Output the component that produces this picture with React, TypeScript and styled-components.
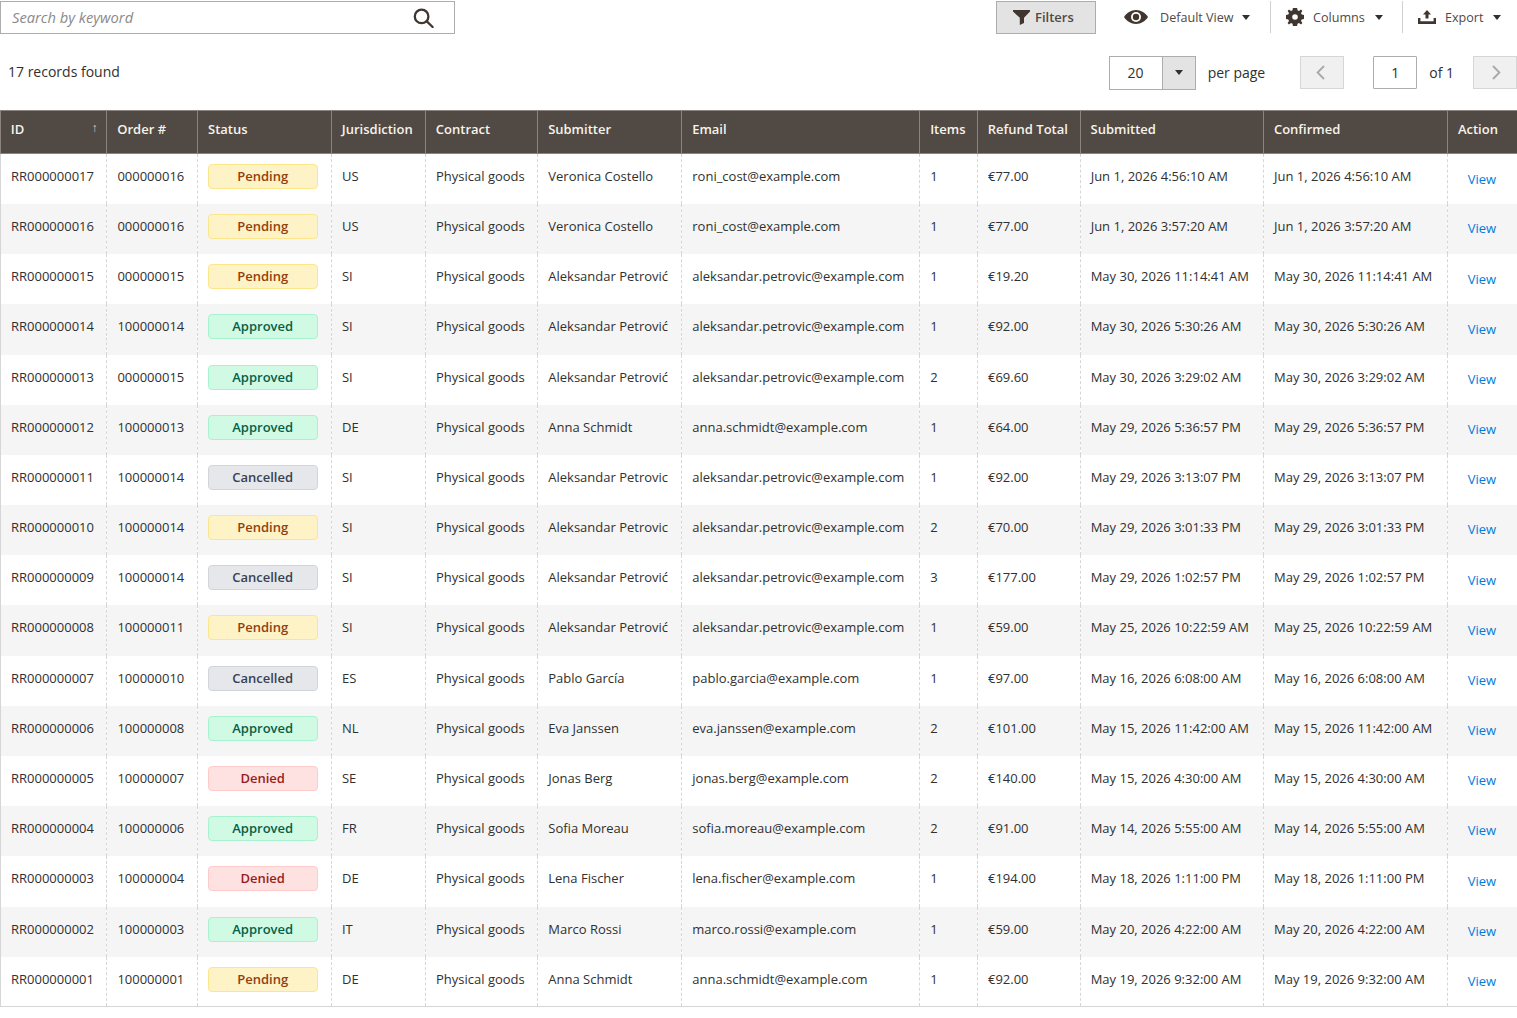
import React from "react";
import styled, { createGlobalStyle } from "styled-components";

type Status = "Pending" | "Approved" | "Cancelled" | "Denied";

interface RefundRow {
  id: string;
  order: string;
  status: Status;
  region: string;
  submitter: string;
  email: string;
  items: number;
  total: string;
  submitted: string;
  confirmed: string;
}

const rows: RefundRow[] = [
  { id: "RR000000017", order: "000000016", status: "Pending", region: "US", submitter: "Veronica Costello", email: "roni_cost@example.com", items: 1, total: "€77.00", submitted: "Jun 1, 2026 4:56:10 AM", confirmed: "Jun 1, 2026 4:56:10 AM" },
  { id: "RR000000016", order: "000000016", status: "Pending", region: "US", submitter: "Veronica Costello", email: "roni_cost@example.com", items: 1, total: "€77.00", submitted: "Jun 1, 2026 3:57:20 AM", confirmed: "Jun 1, 2026 3:57:20 AM" },
  { id: "RR000000015", order: "000000015", status: "Pending", region: "SI", submitter: "Aleksandar Petrović", email: "aleksandar.petrovic@example.com", items: 1, total: "€19.20", submitted: "May 30, 2026 11:14:41 AM", confirmed: "May 30, 2026 11:14:41 AM" },
  { id: "RR000000014", order: "100000014", status: "Approved", region: "SI", submitter: "Aleksandar Petrović", email: "aleksandar.petrovic@example.com", items: 1, total: "€92.00", submitted: "May 30, 2026 5:30:26 AM", confirmed: "May 30, 2026 5:30:26 AM" },
  { id: "RR000000013", order: "000000015", status: "Approved", region: "SI", submitter: "Aleksandar Petrović", email: "aleksandar.petrovic@example.com", items: 2, total: "€69.60", submitted: "May 30, 2026 3:29:02 AM", confirmed: "May 30, 2026 3:29:02 AM" },
  { id: "RR000000012", order: "100000013", status: "Approved", region: "DE", submitter: "Anna Schmidt", email: "anna.schmidt@example.com", items: 1, total: "€64.00", submitted: "May 29, 2026 5:36:57 PM", confirmed: "May 29, 2026 5:36:57 PM" },
  { id: "RR000000011", order: "100000014", status: "Cancelled", region: "SI", submitter: "Aleksandar Petrovic", email: "aleksandar.petrovic@example.com", items: 1, total: "€92.00", submitted: "May 29, 2026 3:13:07 PM", confirmed: "May 29, 2026 3:13:07 PM" },
  { id: "RR000000010", order: "100000014", status: "Pending", region: "SI", submitter: "Aleksandar Petrovic", email: "aleksandar.petrovic@example.com", items: 2, total: "€70.00", submitted: "May 29, 2026 3:01:33 PM", confirmed: "May 29, 2026 3:01:33 PM" },
  { id: "RR000000009", order: "100000014", status: "Cancelled", region: "SI", submitter: "Aleksandar Petrović", email: "aleksandar.petrovic@example.com", items: 3, total: "€177.00", submitted: "May 29, 2026 1:02:57 PM", confirmed: "May 29, 2026 1:02:57 PM" },
  { id: "RR000000008", order: "100000011", status: "Pending", region: "SI", submitter: "Aleksandar Petrović", email: "aleksandar.petrovic@example.com", items: 1, total: "€59.00", submitted: "May 25, 2026 10:22:59 AM", confirmed: "May 25, 2026 10:22:59 AM" },
  { id: "RR000000007", order: "100000010", status: "Cancelled", region: "ES", submitter: "Pablo García", email: "pablo.garcia@example.com", items: 1, total: "€97.00", submitted: "May 16, 2026 6:08:00 AM", confirmed: "May 16, 2026 6:08:00 AM" },
  { id: "RR000000006", order: "100000008", status: "Approved", region: "NL", submitter: "Eva Janssen", email: "eva.janssen@example.com", items: 2, total: "€101.00", submitted: "May 15, 2026 11:42:00 AM", confirmed: "May 15, 2026 11:42:00 AM" },
  { id: "RR000000005", order: "100000007", status: "Denied", region: "SE", submitter: "Jonas Berg", email: "jonas.berg@example.com", items: 2, total: "€140.00", submitted: "May 15, 2026 4:30:00 AM", confirmed: "May 15, 2026 4:30:00 AM" },
  { id: "RR000000004", order: "100000006", status: "Approved", region: "FR", submitter: "Sofia Moreau", email: "sofia.moreau@example.com", items: 2, total: "€91.00", submitted: "May 14, 2026 5:55:00 AM", confirmed: "May 14, 2026 5:55:00 AM" },
  { id: "RR000000003", order: "100000004", status: "Denied", region: "DE", submitter: "Lena Fischer", email: "lena.fischer@example.com", items: 1, total: "€194.00", submitted: "May 18, 2026 1:11:00 PM", confirmed: "May 18, 2026 1:11:00 PM" },
  { id: "RR000000002", order: "100000003", status: "Approved", region: "IT", submitter: "Marco Rossi", email: "marco.rossi@example.com", items: 1, total: "€59.00", submitted: "May 20, 2026 4:22:00 AM", confirmed: "May 20, 2026 4:22:00 AM" },
  { id: "RR000000001", order: "100000001", status: "Pending", region: "DE", submitter: "Anna Schmidt", email: "anna.schmidt@example.com", items: 1, total: "€92.00", submitted: "May 19, 2026 9:32:00 AM", confirmed: "May 19, 2026 9:32:00 AM" },
];

const columns = [
  { label: "ID", width: 106.4 },
  { label: "Order #", width: 90.8 },
  { label: "Status", width: 133.8 },
  { label: "Jurisdiction", width: 94 },
  { label: "Contract", width: 112.3 },
  { label: "Submitter", width: 144 },
  { label: "Email", width: 238 },
  { label: "Items", width: 57.7 },
  { label: "Refund Total", width: 102.7 },
  { label: "Submitted", width: 183.4 },
  { label: "Confirmed", width: 184 },
  { label: "Action", width: 69.9 },
];

const statusColors: Record<Status, { bg: string; border: string; fg: string }> = {
  Pending: { bg: "#fef3c7", border: "#fde68a", fg: "#92400e" },
  Approved: { bg: "#d1fae5", border: "#a7f3d0", fg: "#065f46" },
  Cancelled: { bg: "#e5e7eb", border: "#d1d5db", fg: "#374151" },
  Denied: { bg: "#fee2e2", border: "#fecaca", fg: "#991b1b" },
};

const GlobalStyle = createGlobalStyle`
  body {
    margin: 0;
    background: #fff;
    color: #303030;
    font-family: "Open Sans", "Liberation Sans", sans-serif;
    font-size: 14px;
  }
`;

const Page = styled.div`
  width: 1517px;
`;

const TopBar = styled.div`
  display: flex;
  align-items: flex-start;
  justify-content: space-between;
  height: 45px;
  padding-top: 1px;
  box-sizing: border-box;
`;

const SearchBox = styled.div`
  width: 455px;
  height: 33px;
  box-sizing: border-box;
  border: 1px solid #adadad;
  display: flex;
  align-items: center;
  justify-content: space-between;
  padding: 0 20px 0 11px;
`;

const SearchHint = styled.span`
  font-style: italic;
  font-size: 14.7px;
  color: #8a8a8a;
  position: relative;
  top: -1px;
`;

const Actions = styled.div`
  display: flex;
  align-items: flex-start;
`;

const FilterButton = styled.button`
  width: 100px;
  height: 33px;
  box-sizing: border-box;
  margin-right: 28px;
  border: 1px solid #adadad;
  background: #e3e3e3;
  color: #514943;
  font: 600 13px "Open Sans", sans-serif;
  display: flex;
  align-items: center;
  gap: 5px;
  padding: 0 0 1px 16px;
`;

const MenuItem = styled.div<{ $width: number; $divider?: boolean }>`
  width: ${(p) => p.$width}px;
  height: 32px;
  box-sizing: border-box;
  display: flex;
  align-items: center;
  font-size: 12.6px;
  color: #514943;
  border-left: ${(p) => (p.$divider ? "1px solid #d1d1d1" : "none")};
  padding-left: ${(p) => (p.$divider ? 15 : 0)}px;
`;

const MenuLabel = styled.span<{ $gap: number }>`
  margin-left: ${(p) => p.$gap}px;
`;

const Caret = styled.span<{ $gap: number }>`
  width: 0;
  height: 0;
  margin-left: ${(p) => p.$gap}px;
  border-left: 4px solid transparent;
  border-right: 4px solid transparent;
  border-top: 5px solid #303030;
`;

const PagerBar = styled.div`
  display: flex;
  align-items: center;
  justify-content: space-between;
  height: 55px;
  margin-bottom: 10px;
  padding-left: 8px;
  box-sizing: border-box;
`;

const RecordCount = styled.span`
  font-size: 14px;
  color: #303030;
  position: relative;
  top: -1px;
`;

const Pager = styled.div`
  display: flex;
  align-items: center;
  font-size: 14px;
  color: #303030;
`;

const PerPage = styled.div`
  width: 87px;
  height: 34px;
  box-sizing: border-box;
  border: 1px solid #adadad;
  display: flex;
  margin-right: 12px;
`;

const PerPageValue = styled.div`
  flex: 1;
  display: flex;
  align-items: center;
  justify-content: center;
`;

const PerPageToggle = styled.div`
  width: 32px;
  background: #e3e3e3;
  border-left: 1px solid #adadad;
  display: flex;
  align-items: center;
  justify-content: center;
`;

const PageNav = styled.div<{ $gap: number }>`
  width: 44px;
  height: 33px;
  box-sizing: border-box;
  border: 1px solid #d6d6d6;
  background: #f0f0f0;
  display: flex;
  align-items: center;
  justify-content: center;
  margin-left: ${(p) => p.$gap}px;
`;

const PageInput = styled.div`
  width: 44px;
  height: 33px;
  box-sizing: border-box;
  border: 1px solid #adadad;
  border-radius: 1px;
  display: flex;
  align-items: center;
  justify-content: center;
  margin: 0 12px 0 29px;
`;

const Chevron = styled.svg<{ $flip?: boolean }>`
  margin: ${(p) => (p.$flip ? "0 0 0 3px" : "0 3px 0 0")};
  transform: ${(p) => (p.$flip ? "scaleX(-1)" : "none")};
`;

const Table = styled.table`
  width: 1517px;
  table-layout: fixed;
  border-collapse: collapse;
  font-size: 13px;
  color: #303030;
`;

const HeadCell = styled.th`
  height: 43.43px;
  box-sizing: border-box;
  padding: 9px 10px 0 9.85px;
  vertical-align: top;
  line-height: 18px;
  background: #514943;
  color: #f7f3eb;
  border: 1px solid #8a837f;
  font-weight: 600;
  font-size: 13px;
  text-align: left;
  white-space: nowrap;
  position: relative;
`;

const SortMark = styled.span`
  position: absolute;
  right: 9px;
  top: 8px;
  font-size: 12px;
  font-weight: 400;
  color: #d6d2ce;
`;

const Row = styled.tr<{ $odd: boolean }>`
  height: 50.185px;
  background: ${(p) => (p.$odd ? "#f5f5f5" : "#fff")};
`;

const Cell = styled.td`
  padding: 10px 10px 0;
  vertical-align: top;
  line-height: 25px;
  border-left: 1px dashed #d6d6d6;
  border-right: 1px dashed #d6d6d6;
  white-space: nowrap;
  overflow: hidden;
  &:first-child {
    border-left: 1px solid #d6d6d6;
  }
  &:last-child {
    border-right: 1px solid #d6d6d6;
  }
`;

const Body = styled.tbody`
  border-bottom: 1px solid #d6d6d6;
`;

const Badge = styled.div<{ $status: Status }>`
  width: 110px;
  height: 25px;
  box-sizing: border-box;
  display: flex;
  align-items: center;
  justify-content: center;
  border-radius: 4px;
  font-weight: 600;
  padding-right: 1px;
  background: ${(p) => statusColors[p.$status].bg};
  border: 1px solid ${(p) => statusColors[p.$status].border};
  color: ${(p) => statusColors[p.$status].fg};
`;

const ViewLink = styled.a`
  display: block;
  color: #007bdb;
  text-decoration: none;
  padding-left: 9.7px;
  position: relative;
  top: 2.27px;
`;

const SearchIcon = () => (
  <svg width="21" height="20" viewBox="0 0 21 20" fill="none" stroke="#41362f" strokeWidth="2.3">
    <circle cx="8.6" cy="8.4" r="6.8" />
    <path d="M13.6 13.2 L19.6 19" strokeLinecap="round" />
  </svg>
);

const FilterIcon = () => (
  <svg width="17" height="15" viewBox="0 0 17 15" fill="#41362f">
    <path d="M0 0 H17 V1.6 L11 7.8 V13 L6.8 15 V7.8 L0 1.6 Z" />
  </svg>
);

const EyeIcon = () => (
  <svg width="24" height="14" viewBox="0 0 24 14">
    <path fill="#41362f" d="M12 0 C17 0 21.5 3 24 7 C21.5 11 17 14 12 14 C7 14 2.5 11 0 7 C2.5 3 7 0 12 0 Z" />
    <circle cx="12" cy="7" r="5" fill="#fff" />
    <circle cx="12" cy="7" r="3.2" fill="#41362f" />
  </svg>
);

const GearIcon = () => (
  <svg width="18" height="18" viewBox="0 0 18 18">
    <path fill="#41362f" fillRule="evenodd" d="M6.9 0 H11.1 L11.5 2.3 L13 3 L15 1.6 L16.4 3 L15 5 L15.7 6.5 L18 6.9 V11.1 L15.7 11.5 L15 13 L16.4 15 L15 16.4 L13 15 L11.5 15.7 L11.1 18 H6.9 L6.5 15.7 L5 15 L3 16.4 L1.6 15 L3 13 L2.3 11.5 L0 11.1 V6.9 L2.3 6.5 L3 5 L1.6 3 L3 1.6 L5 3 L6.5 2.3 Z M9 6.2 A2.8 2.8 0 1 0 9 11.8 A2.8 2.8 0 1 0 9 6.2 Z" />
  </svg>
);

const ExportIcon = () => (
  <svg width="18" height="14" viewBox="0 0 18 14" fill="#41362f">
    <path d="M9 0 L13 4.4 H10.5 V8.6 H7.5 V4.4 H5 Z" />
    <path d="M0 8 H2.4 V11.2 H15.6 V8 H18 V14 H0 Z" />
  </svg>
);

const ChevronIcon = ({ flip }: { flip?: boolean }) => (
  <Chevron $flip={flip} width="9" height="15" viewBox="0 0 9 15" fill="none" stroke="#a8a8a8" strokeWidth="1.8">
    <path d="M8 1 L1.6 7.5 L8 14" />
  </Chevron>
);

const App: React.FC = () => (
  <Page>
    <GlobalStyle />
    <TopBar>
      <SearchBox>
        <SearchHint>Search by keyword</SearchHint>
        <SearchIcon />
      </SearchBox>
      <Actions>
        <FilterButton>
          <FilterIcon />
          Filters
        </FilterButton>
        <MenuItem $width={146}>
          <EyeIcon />
          <MenuLabel $gap={12}>Default View</MenuLabel>
          <Caret $gap={8} />
        </MenuItem>
        <MenuItem $width={132} $divider>
          <GearIcon />
          <MenuLabel $gap={9}>Columns</MenuLabel>
          <Caret $gap={10} />
        </MenuItem>
        <MenuItem $width={115} $divider>
          <ExportIcon />
          <MenuLabel $gap={9}>Export</MenuLabel>
          <Caret $gap={9} />
        </MenuItem>
      </Actions>
    </TopBar>
    <PagerBar>
      <RecordCount>17 records found</RecordCount>
      <Pager>
        <PerPage>
          <PerPageValue>20</PerPageValue>
          <PerPageToggle>
            <Caret $gap={0} />
          </PerPageToggle>
        </PerPage>
        <span>per page</span>
        <PageNav $gap={35}>
          <ChevronIcon />
        </PageNav>
        <PageInput>1</PageInput>
        <span>of 1</span>
        <PageNav $gap={19}>
          <ChevronIcon flip />
        </PageNav>
      </Pager>
    </PagerBar>
    <Table>
      <colgroup>
        {columns.map((c) => (
          <col key={c.label} style={{ width: c.width }} />
        ))}
      </colgroup>
      <thead>
        <tr>
          {columns.map((c) => (
            <HeadCell key={c.label}>
              {c.label}
              {c.label === "ID" && <SortMark>↑</SortMark>}
            </HeadCell>
          ))}
        </tr>
      </thead>
      <Body>
        {rows.map((r, i) => (
          <Row key={r.id} $odd={i % 2 === 1}>
            <Cell>{r.id}</Cell>
            <Cell>{r.order}</Cell>
            <Cell>
              <Badge $status={r.status}>{r.status}</Badge>
            </Cell>
            <Cell>{r.region}</Cell>
            <Cell>Physical goods</Cell>
            <Cell>{r.submitter}</Cell>
            <Cell>{r.email}</Cell>
            <Cell>{r.items}</Cell>
            <Cell>{r.total}</Cell>
            <Cell>{r.submitted}</Cell>
            <Cell>{r.confirmed}</Cell>
            <Cell>
              <ViewLink href="#">View</ViewLink>
            </Cell>
          </Row>
        ))}
      </Body>
    </Table>
  </Page>
);

export default App;
